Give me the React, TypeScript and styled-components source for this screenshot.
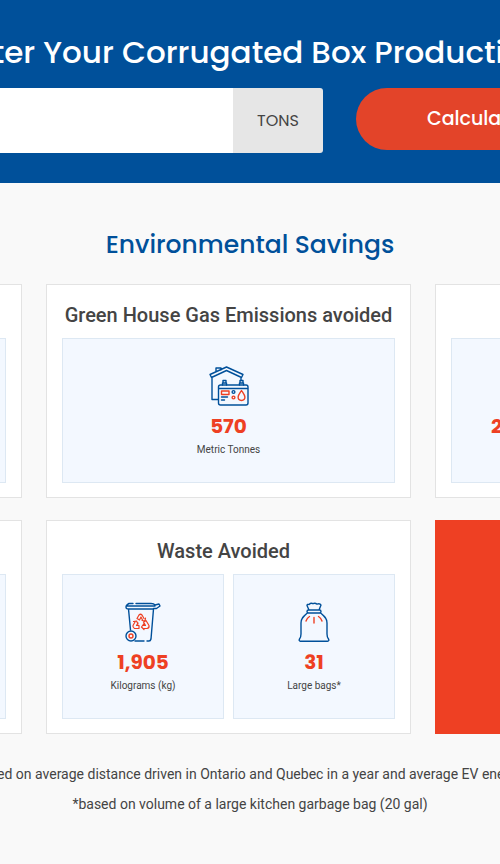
import React from "react";
import styled, { createGlobalStyle } from "styled-components";

const display = `Poppins, Inter, sans-serif`;
const blue = "#00509a";
const red = "#ee4023";

const GlobalStyle = createGlobalStyle`
  *, *::before, *::after { box-sizing: border-box; }
  body {
    margin: 0;
    background: #f9f9f9;
    color: #444;
    font-family: Roboto, sans-serif;
  }
`;

const Page = styled.main`
  min-height: 100vh;
  overflow: hidden;
`;

const Banner = styled.form`
  background: ${blue};
  padding: 28px 0 30px;
`;

const BannerTitle = styled.h1`
  display: flex;
  justify-content: center;
  margin: 0 0 12px;
  color: #fff;
  font: 500 31px/48px ${display};
  white-space: nowrap;
`;

const Controls = styled.div`
  display: grid;
  grid-template-columns: minmax(0, 1fr) 144px;
  gap: 33px;
  align-items: start;
`;

const Field = styled.label`
  display: flex;
  height: 65px;
  border-radius: 0 3px 3px 0;
  overflow: hidden;
`;

const Amount = styled.input`
  flex: 1;
  min-width: 0;
  border: 0;
  padding: 0 24px;
  background: #fff;
  font: 400 20px/30px ${display};
  outline: none;
`;

const Unit = styled.span`
  display: grid;
  place-items: center;
  width: 90px;
  background: #e6e6e6;
  font: 400 16px/24px ${display};
`;

const Calculate = styled.button`
  height: 62px;
  padding: 0 0 0 71px;
  border: 0;
  border-radius: 31px 0 0 31px;
  background: #e34429;
  color: #fff;
  font: 500 19px/30px ${display};
  text-align: left;
  white-space: nowrap;
  overflow: hidden;
`;

const SectionTitle = styled.h2`
  margin: 42px 0 20px;
  color: ${blue};
  font: 500 25px/39px ${display};
  text-align: center;
`;

const Cards = styled.div`
  display: grid;
  grid-template-columns: 22px minmax(0, 1fr) 65px;
  gap: 22px 24px;
`;

type Edge = "left" | "right";

const Card = styled.section<{ $cut?: Edge }>`
  display: flex;
  flex-direction: column;
  min-width: 0;
  min-height: 214px;
  padding: 15px 15px 14px;
  border: 1px solid #e3e3e3;
  background: #fff;
  ${(p) => p.$cut && `border-${p.$cut}: 0; padding-${p.$cut}: 0;`}
`;

const Promo = styled.section`
  background: ${red};
`;

const CardTitle = styled.h3`
  min-height: 30px;
  margin: 0 0 8px;
  font: 500 20px/30px Roboto, sans-serif;
  text-align: center;
`;

const Tiles = styled.div`
  display: flex;
  flex: 1;
  gap: 9px;
`;

const Tile = styled.div<{ $cut?: Edge }>`
  display: flex;
  flex: 1;
  flex-direction: column;
  align-items: center;
  min-width: 0;
  padding-top: 27px;
  border: 1px solid #dde8f3;
  background: #f3f8ff;
  ${(p) => p.$cut && `border-${p.$cut}: 0;`}
  ${(p) => p.$cut === "right" && `align-items: flex-start; padding: 67px 0 0 39px;`}
`;

const Icon = styled.svg`
  width: 40px;
  height: 40px;
  fill: none;
  stroke: ${blue};
  stroke-width: 1.4;
  stroke-linecap: round;
  stroke-linejoin: round;
`;

const Value = styled.strong`
  color: ${red};
  font: 700 20px/40px ${display};
`;

const Caption = styled.span`
  font-size: 10px;
  line-height: 8px;
`;

const Notes = styled.footer`
  display: flex;
  flex-direction: column;
  align-items: center;
  margin-top: 25px;
  padding-bottom: 40px;
  font-size: 14px;
  line-height: 30px;
  white-space: nowrap;
`;

const Note = styled.p`
  margin: 0;
`;

const HouseIcon = () => (
  <Icon viewBox="0 0 40 40" aria-hidden="true">
    <path d="M7 5V2h5v2M3 11v22.500h6M1 8.500 17.500 1 34 8.500l-1.500 3L17.500 4.500 2.500 11.500ZM32 12v2" />
    <rect x="9.500" y="19" width="29.500" height="20" rx="2" />
    <path d="M10 22.500h28.500M13.500 19v-2h4v2M14 16.500v-2h3v2M30.500 19v-2h4v2M31 16.500v-2h3v2M12.500 31h6M12.500 34h3" />
    <circle cx="24.500" cy="26" r="1.400" />
    <g stroke={red}>
      <rect x="12.500" y="25" width="7.500" height="3.500" />
      <circle cx="24.500" cy="31.500" r="1.400" />
      <path d="M32.500 24.500c-1.500 2.500-3.400 4.500-3.400 6.600a3.400 3.400 0 0 0 6.800 0c0-2.100-1.900-4.100-3.400-6.600Z" />
    </g>
  </Icon>
);

const BinIcon = () => (
  <Icon viewBox="0 0 40 40" aria-hidden="true">
    <path d="M6 1.500h4M13 1.500h15q3 0 4 1.500l4-1 1 2-3.500 2.500h-3L30 7H5.500Q3 7 3 5T6 1.500M4 4h28M5.500 7l2 21M30.500 7l-2.500 30q-.5 2-2 2H24M21 39h-9" />
    <circle cx="8" cy="34" r="5" />
    <g stroke={red}>
      <circle cx="8" cy="34" r="2" />
      <g strokeWidth="1.200">
        <path d="m14 16.500 2-3.500q1.500-1.500 3 0l2 3.500M14 16.500l2.500 1.500 1.500-3 1.500 3M19 18.500l3 .5.500-3" />
        <path d="m23 18.500 3 5q.5 2.500-2 3h-4M23 18.500l-2.500 1.500 2 3.500H20M21 21.500 18.500 25l2.500 2.500" />
        <path d="M16 26.500h-4.500q-2-1-1.500-3l2-3.500M16 26.500v-3h-2.500l1.500-2.500M10.500 19.500l3-.5 1.500 3" />
      </g>
    </g>
  </Icon>
);

const BagIcon = () => (
  <Icon viewBox="0 0 40 40" aria-hidden="true">
    <path d="M15 8 13 3.500Q13 2 15 2.500q2-2 4-.8 2-1 4 .4 3-1 4 .9L25 8M14.500 8h11a1.500 1.500 0 0 1 0 3h-11a1.500 1.500 0 0 1 0-3ZM13.500 11C10 14 7 16 7 21v11q0 3-1.500 5-1 2 1 2.300h27q2-.3 1-2.300Q33 35 33 32V21c0-5-3-7-6.500-10" />
    <path d="M20 15.500v5.500M15.500 14.500Q13 16 12 19M24.500 14.500Q27 16 28 19" stroke={red} />
  </Icon>
);

export default function App() {
  return (
    <Page>
      <GlobalStyle />
      <Banner onSubmit={(e) => e.preventDefault()}>
        <BannerTitle>Enter Your Corrugated Box Production</BannerTitle>
        <Controls>
          <Field>
            <Amount type="text" inputMode="decimal" />
            <Unit>TONS</Unit>
          </Field>
          <Calculate type="submit">Calculate</Calculate>
        </Controls>
      </Banner>

      <SectionTitle>Environmental Savings</SectionTitle>
      <Cards>
        <Card $cut="left">
          <CardTitle />
          <Tiles><Tile $cut="left" /></Tiles>
        </Card>
        <Card>
          <CardTitle>Green House Gas Emissions avoided</CardTitle>
          <Tiles>
            <Tile>
              <HouseIcon />
              <Value>570</Value>
              <Caption>Metric Tonnes</Caption>
            </Tile>
          </Tiles>
        </Card>
        <Card $cut="right">
          <CardTitle />
          <Tiles><Tile $cut="right"><Value>2</Value></Tile></Tiles>
        </Card>
        <Card $cut="left">
          <CardTitle />
          <Tiles><Tile $cut="left" /></Tiles>
        </Card>
        <Card>
          <CardTitle>Waste Avoided{"\u00a0\u00a0"}</CardTitle>
          <Tiles>
            <Tile>
              <BinIcon />
              <Value>1,905</Value>
              <Caption>Kilograms (kg)</Caption>
            </Tile>
            <Tile>
              <BagIcon />
              <Value>31</Value>
              <Caption>Large bags*</Caption>
            </Tile>
          </Tiles>
        </Card>
        <Promo />
      </Cards>

      <Notes>
        <Note>Based on average distance driven in Ontario and Quebec in a year and average EV energy.</Note>
        <Note>*based on volume of a large kitchen garbage bag (20 gal)</Note>
      </Notes>
    </Page>
  );
}
